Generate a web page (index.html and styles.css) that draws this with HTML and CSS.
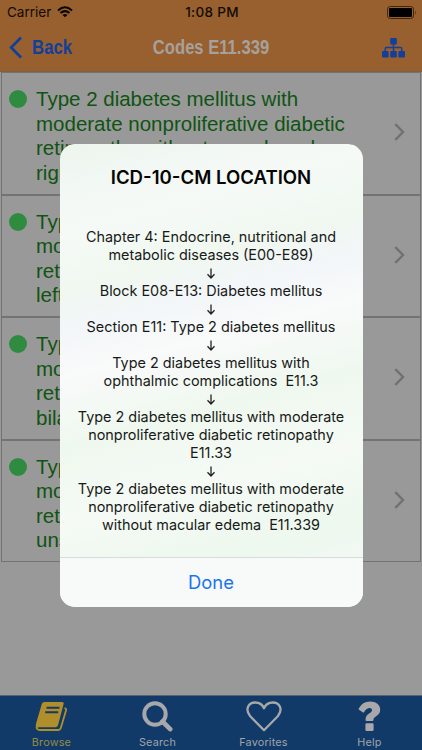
FILE: index.html
```html
<!DOCTYPE html>
<html lang="en">
<head>
<meta charset="utf-8">
<title>Codes E11.339</title>
<link rel="stylesheet" href="styles.css">
</head>
<body>
<div class="app">
  <header class="header">
    <div class="status">
      <div class="carrier"><span class="carrier-name">Carrier</span>
        <svg width="16" height="12" viewBox="0 0 16 12" fill="none" stroke="#080503" stroke-width="2"><path d="M1 4.4Q8-1.8 15 4.4M3.5 7Q8 3.2 12.5 7"/><path d="M8 11.3L5.5 8.9Q8 6.9 10.5 8.9Z" fill="#080503" stroke="none"/></svg>
      </div>
      <span class="time">1:08 PM</span>
      <svg class="battery" width="29" height="13" viewBox="0 0 29 13"><rect x=".5" y=".5" width="26" height="12" rx="2.8" fill="none" stroke="#3d2613"/><rect x="2" y="2" width="23" height="9" rx="1" fill="#000"/><path d="M28 4.5q1 2 0 4z" fill="#23150a"/></svg>
    </div>
    <nav class="nav">
      <div class="back"><svg width="14" height="23" viewBox="0 0 14 23"><path d="M12 1.5L2.2 11.5L12 21.5" fill="none" stroke="#123f9a" stroke-width="2.7"/></svg><span class="back-label">Back</span></div>
      <h1 class="title">Codes E11.339</h1>
      <svg class="tree" width="23" height="20" viewBox="0 0 23 20" fill="#123f9a"><rect x="8.2" y="0" width="6.6" height="6.5" rx="1"/><rect x="0" y="13" width="6.6" height="6.5" rx="1"/><rect x="8.2" y="13" width="6.6" height="6.5" rx="1"/><rect x="16.4" y="13" width="6.6" height="6.5" rx="1"/><path d="M11.5 6V14M3.3 14V10.6Q3.3 9.6 4.3 9.6H18.7Q19.7 9.6 19.7 10.6V14" fill="none" stroke="#123f9a" stroke-width="1.5"/></svg>
    </nav>
  </header>
  <main class="list">
    <div class="row"><i class="dot"></i><p class="desc">Type 2 diabetes mellitus with<br>moderate nonproliferative diabetic<br>retinopathy without macular edema,<br>right eye</p><svg class="chevron" width="11" height="18" viewBox="0 0 11 18"><path d="M1.3 1.2L9 9L1.3 16.8"/></svg></div>
    <div class="row"><i class="dot"></i><p class="desc">Type 2 diabetes mellitus with<br>moderate nonproliferative diabetic<br>retinopathy without macular edema,<br>left eye</p><svg class="chevron" width="11" height="18" viewBox="0 0 11 18"><path d="M1.3 1.2L9 9L1.3 16.8"/></svg></div>
    <div class="row"><i class="dot"></i><p class="desc">Type 2 diabetes mellitus with<br>moderate nonproliferative diabetic<br>retinopathy without macular edema,<br>bilateral</p><svg class="chevron" width="11" height="18" viewBox="0 0 11 18"><path d="M1.3 1.2L9 9L1.3 16.8"/></svg></div>
    <div class="row"><i class="dot"></i><p class="desc">Type 2 diabetes mellitus with<br>moderate nonproliferative diabetic<br>retinopathy without macular edema,<br>unspecified eye</p><svg class="chevron" width="11" height="18" viewBox="0 0 11 18"><path d="M1.3 1.2L9 9L1.3 16.8"/></svg></div>
  </main>
  <footer class="tabs">
    <div class="tab active"><svg width="33" height="31" viewBox="0 0 33 31"><path d="M29.5 7.2Q31.7 7.5 31 9.6L25.8 27Q25.2 29 23.2 29H4.6Q1.8 29 1.4 26" fill="none" stroke="#b08f2b" stroke-width="1.8"/><path d="M9.5 1H27Q29.2 1 28.6 3L23 24.3Q22.3 26.3 20.3 26.3H4Q2.4 26.3 2.2 27.4Q.2 26 1 22.7L6.8 3Q7.5 1 9.5 1Z" fill="#b08f2b"/><path d="M11.5 6.7H24.5M10.2 11.2H23.2" stroke="#133a69" stroke-width="1.9"/></svg><span>Browse</span></div>
    <div class="tab"><svg width="31" height="31" viewBox="0 0 31 31" fill="none" stroke="#a8a8ab"><circle cx="13" cy="13" r="10.7" stroke-width="4"/><path d="M20.5 20.5L28.2 28.2" stroke-width="4.6" stroke-linecap="round"/></svg><span>Search</span></div>
    <div class="tab"><svg width="36" height="31" viewBox="0 0 36 31"><path d="M18 29.2L4.2 15.3C-1.5 8 2.5 1.5 9.3 1.5C13.5 1.5 16.5 4 18 7.2C19.5 4 22.5 1.5 26.7 1.5C33.5 1.5 37.5 8 31.8 15.3Z" fill="none" stroke="#a8a8ab" stroke-width="2.3" stroke-linejoin="round"/></svg><span>Favorites</span></div>
    <div class="tab"><svg width="23" height="31" viewBox="0 0 23 31" fill="#a8a8ab"><path d="M.7 7.6Q4.3.5 12 .5C18 .5 22.2 3.8 22.2 8.7C22.2 15.2 15.4 14.8 15.4 19Q15.4 20 14.4 20H8.6Q7.5 20 7.5 19C7.5 12.2 14 12.4 14 9.2C14 6 9 5.8 6 11.2Q5.6 11.8 5 11.4L1 8.8Q.4 8.3.7 7.6Z"/><rect x="7.4" y="22.3" width="8.2" height="7.7" rx="1.3"/></svg><span>Help</span></div>
  </footer>
</div>
<div class="overlay">
  <section class="dialog">
    <h2 class="dialog-title">ICD-10-CM LOCATION</h2>
    <div class="path">
      <p>Chapter 4: Endocrine, nutritional and<br>metabolic diseases (E00-E89)</p>
      <svg class="arrow" width="10" height="18" viewBox="0 0 10 18"><path d="M5 4.5V14M1.5 10.3L5 14L8.5 10.3"/></svg>
      <p>Block E08-E13: Diabetes mellitus</p>
      <svg class="arrow" width="10" height="18" viewBox="0 0 10 18"><path d="M5 4.5V14M1.5 10.3L5 14L8.5 10.3"/></svg>
      <p>Section E11: Type 2 diabetes mellitus</p>
      <svg class="arrow" width="10" height="18" viewBox="0 0 10 18"><path d="M5 4.5V14M1.5 10.3L5 14L8.5 10.3"/></svg>
      <p>Type 2 diabetes mellitus with<br>ophthalmic complications&nbsp; E11.3</p>
      <svg class="arrow" width="10" height="18" viewBox="0 0 10 18"><path d="M5 4.5V14M1.5 10.3L5 14L8.5 10.3"/></svg>
      <p>Type 2 diabetes mellitus with moderate<br>nonproliferative diabetic retinopathy<br>E11.33</p>
      <svg class="arrow" width="10" height="18" viewBox="0 0 10 18"><path d="M5 4.5V14M1.5 10.3L5 14L8.5 10.3"/></svg>
      <p>Type 2 diabetes mellitus with moderate<br>nonproliferative diabetic retinopathy<br>without macular edema&nbsp; E11.339</p>
    </div>
    <div class="done">Done</div>
  </section>
</div>
</body>
</html>
```
FILE: styles.css
```css
* { box-sizing: border-box; }
body { margin: 0; width: 422px; height: 750px; overflow: hidden; background: #999; font-family: Inter, sans-serif; }
h1, h2, p { margin: 0; font-weight: inherit; }
svg { display: block; flex: none; }
.app { display: flex; flex-direction: column; height: 750px; }
.header { height: 72px; background: #985f2f; border-bottom: 1px solid #80603f; flex: none; }
.status { height: 24px; display: grid; grid-template-columns: 1fr auto 1fr; align-items: center; padding: 0 6px 0 7px; font-size: 13.5px; color: #120b05; }
.carrier { display: flex; align-items: center; gap: 6px; }
.time { font-weight: 500; letter-spacing: .3px; margin-left: 1px; }
.battery { justify-self: end; }
.nav { height: 47px; display: grid; grid-template-columns: 1fr auto 1fr; align-items: center; padding: 0 17px 0 9px; font: bold 20px "Liberation Sans", sans-serif; color: #123f9a; }
.back { display: flex; align-items: center; gap: 9px; }
.back-label { transform: scaleX(.84); transform-origin: left; }
.title { font-size: 20px; font-weight: bold; color: #a6a19d; width: 118px; white-space: nowrap; display: flex; justify-content: center; margin-left: 7px; transform: scaleX(.83); }
.tree { justify-self: end; }
.list { flex: 1; padding: 0 1px; }
.row { height: 122.5px; border: 1px solid #737376; display: flex; align-items: flex-start; padding: 14px 15px 0 7px; }
.dot { width: 18px; height: 18px; border-radius: 50%; background: #2f8b40; margin-top: 3px; flex: none; }
.desc { flex: 1; margin-left: 9px; font: 20.5px/24.6px "Liberation Sans", sans-serif; color: #0f5412; white-space: nowrap; }
.chevron { margin-top: 36px; }
.chevron path { fill: none; stroke: #717174; stroke-width: 2.4; }
.tabs { height: 55px; background: #113a69; border-top: 1px solid #59636f; display: grid; grid-template-columns: 103px 109px 103px 107px; flex: none; }
.tab { display: flex; flex-direction: column; align-items: center; padding-top: 5px; font-size: 10.8px; line-height: 13px; letter-spacing: .2px; color: #a0a4a9; }
.tab span { margin-top: 4px; }
.tab:last-child span { margin-left: 2px; }
.tab:last-child svg { margin-left: 2px; }
.active { color: #958b45; }
.overlay { position: absolute; inset: 0; display: flex; align-items: flex-start; padding: 143.5px 0 0 59.5px; }
.dialog { width: 303px; height: 463px; border-radius: 15px; background: linear-gradient(165deg, #edf5ee 0, #f6faf7 16%, #f0f8f0 27%, #f2f6f8 34%, #f9fafa 43%, #eff8ef 56%, #f5faf5 70%, #edf8ee 84%, #f8f9fa 100%); display: flex; flex-direction: column; overflow: hidden; text-align: center; }
.dialog-title { font-size: 18.6px; line-height: 24px; font-weight: 600; color: #050505; padding-top: 21px; }
.path { flex: 1; margin-top: 39.5px; font-size: 14.4px; line-height: 18px; color: #181a18; display: flex; flex-direction: column; align-items: center; white-space: nowrap; }
.arrow path { fill: none; stroke: #222; stroke-width: 1.3; }
.done { height: 50px; border-top: 1px solid #d5dcda; background: #f8f9f9; font-size: 18.4px; line-height: 48px; color: #1976ef; }
```
